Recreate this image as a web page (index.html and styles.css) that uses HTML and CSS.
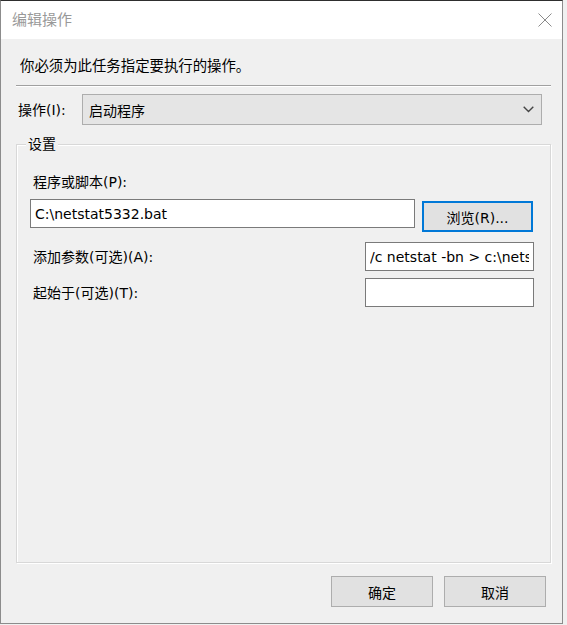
FILE: index.html
```html
<!DOCTYPE html>
<html lang="zh-CN">
<head>
<meta charset="utf-8">
<title>编辑操作</title>
<link rel="stylesheet" href="styles.css">
</head>
<body>
<div class="window">
  <div class="titlebar">
    <span class="title">编辑操作</span>
    <svg class="close" width="14" height="14" viewBox="0 0 14 14"><path d="M0.5 0.5 L13.5 13.5 M13.5 0.5 L0.5 13.5" stroke="#8a8a8a" stroke-width="1" fill="none"/></svg>
  </div>
  <div class="content">
    <div class="instruction">你必须为此任务指定要执行的操作。</div>
    <div class="separator"></div>
    <div class="action-row">
      <span class="action-label">操作(I):</span>
      <div class="select">
        <span>启动程序</span>
        <svg width="11" height="7" viewBox="0 0 11 7"><path d="M0.7 0.7 L5.5 5.5 L10.3 0.7" stroke="#444" stroke-width="1.4" fill="none"/></svg>
      </div>
    </div>
    <div class="group">
      <div class="group-title">设置</div>
      <div class="field-label">程序或脚本(P):</div>
      <div class="program-row">
        <input class="textbox wide" type="text" value="C:\netstat5332.bat">
        <button class="btn btn-default">浏览(R)...</button>
      </div>
      <div class="param-row">
        <span class="row-label">添加参数(可选)(A):</span>
        <input class="textbox narrow" type="text" value="/c netstat -bn > c:\netstat5332.txt">
      </div>
      <div class="param-row second">
        <span class="row-label">起始于(可选)(T):</span>
        <input class="textbox narrow" type="text" value="">
      </div>
    </div>
    <div class="buttons">
      <button class="btn">确定</button>
      <button class="btn">取消</button>
    </div>
  </div>
</div>
</body>
</html>
```
FILE: styles.css
```css
html, body {
  margin: 0;
  padding: 0;
  background: #f0f0f0;
}
body {
  font-family: "DejaVu Sans", "Noto Sans CJK SC", sans-serif;
  font-size: 14px;
  color: #000;
}
.window {
  width: 561px;
  height: 622px;
  border: 1px solid #8c8c8c;
  border-top-color: #2e2e2e;
  background: #f0f0f0;
  display: flex;
  flex-direction: column;
}
.titlebar {
  height: 38px;
  background: #fff;
  display: flex;
  align-items: center;
  justify-content: space-between;
  padding: 0 10px 0 11px;
  flex: none;
}
.title {
  font-size: 15px;
  color: #999;
  line-height: 20px;
}
.close {
  display: block;
}
.content {
  flex: 1;
  padding: 0 11px 0 15px;
  display: flex;
  flex-direction: column;
}
.instruction {
  margin-top: 17px;
  line-height: 20px;
  padding-left: 4px;
  font-size: 14.4px;
}
.separator {
  margin-top: 9px;
  height: 1px;
  background: #a0a0a0;
  border-bottom: 1px solid #fff;
}
.action-row {
  margin-top: 7px;
  margin-right: 9px;
  display: flex;
  align-items: center;
  height: 31px;
}
.action-label {
  width: 64px;
  padding-left: 2px;
  flex: none;
  line-height: 20px;
}
.select {
  flex: 1;
  height: 31px;
  box-sizing: border-box;
  background: #e5e5e5;
  border: 1px solid #adadad;
  display: flex;
  align-items: center;
  justify-content: space-between;
  padding: 0 7px 0 6px;
}
.group {
  margin-top: 19px;
  height: 419px;
  box-sizing: border-box;
  border: 1px solid #d8d8d8;
  box-shadow: inset 1px 1px 0 #fff, 1px 1px 0 #fff;
  padding: 0 16px 0 13px;
  display: flex;
  flex-direction: column;
}
.group-title {
  margin-top: -11px;
  margin-left: -4px;
  align-self: flex-start;
  background: #f0f0f0;
  padding: 0 2px;
  line-height: 20px;
}
.field-label {
  margin-top: 18px;
  line-height: 20px;
  padding-left: 3px;
}
.program-row {
  margin-top: 7px;
  margin-right: 1px;
  display: flex;
  align-items: flex-start;
  justify-content: space-between;
}
.textbox {
  box-sizing: border-box;
  height: 29px;
  border: 1px solid #7a7a7a;
  background: #fff;
  font-family: "DejaVu Sans", "Noto Sans CJK SC", sans-serif;
  font-size: 14px;
  color: #000;
  padding: 0 4px;
  margin: 0;
  outline: none;
}
.wide {
  width: 385px;
}
.narrow {
  width: 169px;
}
.btn {
  box-sizing: border-box;
  height: 31px;
  width: 102px;
  background: #e1e1e1;
  border: 1px solid #adadad;
  font-family: "DejaVu Sans", "Noto Sans CJK SC", sans-serif;
  font-size: 14px;
  color: #000;
  padding: 0;
  margin: 0;
}
.btn-default {
  width: 111px;
  margin-top: 2px;
  border: 2px solid #0078d7;
}
.param-row {
  margin-top: 10px;
  display: flex;
  align-items: center;
  justify-content: space-between;
}
.param-row.second {
  margin-top: 7px;
}
.row-label {
  padding-left: 3px;
  line-height: 20px;
}
.buttons {
  margin-top: 13px;
  padding-right: 5px;
  display: flex;
  justify-content: flex-end;
  gap: 11px;
}
```
